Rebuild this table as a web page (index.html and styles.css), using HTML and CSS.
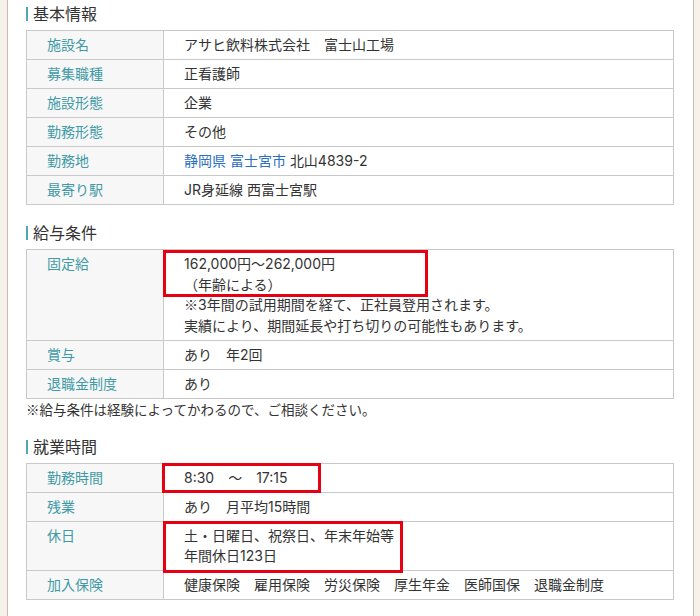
FILE: index.html
```html
<!DOCTYPE html>
<html lang="ja">
<head>
<meta charset="utf-8">
<title>求人詳細</title>
<link rel="stylesheet" href="styles.css">
</head>
<body>
<div class="page">
  <section class="block">
    <h2 class="block-title">基本情報</h2>
    <table class="info">
      <tr><th>施設名</th><td>アサヒ飲料株式会社　富士山工場</td></tr>
      <tr><th>募集職種</th><td>正看護師</td></tr>
      <tr><th>施設形態</th><td>企業</td></tr>
      <tr><th>勤務形態</th><td>その他</td></tr>
      <tr><th>勤務地</th><td><a class="link" href="#">静岡県</a> <a class="link" href="#">富士宮市</a> 北山4839-2</td></tr>
      <tr><th>最寄り駅</th><td>JR身延線 西富士宮駅</td></tr>
    </table>
  </section>

  <section class="block block-next">
    <h2 class="block-title">給与条件</h2>
    <table class="info">
      <tr><th>固定給</th><td class="mark-cell">162,000円～262,000円<br>（年齢による）<br><span class="cjk">※</span>3年間の試用期間を経て、正社員登用されます。<br>実績により、期間延長や打ち切りの可能性もあります。<span class="mark mark-salary"></span></td></tr>
      <tr><th>賞与</th><td>あり　年2回</td></tr>
      <tr><th>退職金制度</th><td>あり</td></tr>
    </table>
    <p class="note">※給与条件は経験によってかわるので、ご相談ください。</p>
  </section>

  <section class="block block-next2">
    <h2 class="block-title">就業時間</h2>
    <table class="info">
      <tr><th>勤務時間</th><td class="mark-cell">8:30　～　17:15<span class="mark mark-time"></span></td></tr>
      <tr><th>残業</th><td>あり　月平均15時間</td></tr>
      <tr><th>休日</th><td class="mark-cell">土・日曜日、祝祭日、年末年始等<br>年間休日123日<span class="mark mark-holiday"></span></td></tr>
      <tr><th>加入保険</th><td>健康保険　雇用保険　労災保険　厚生年金　医師国保　退職金制度</td></tr>
    </table>
  </section>
</div>
</body>
</html>
```

FILE: styles.css
```css
html, body {
  margin: 0;
  padding: 0;
}
body {
  background: #f7f1ec;
  font-family: Inter, "Noto Sans CJK JP", sans-serif;
  color: #333333;
  height: 616px;
  overflow: hidden;
}
.page {
  margin-left: 7px;
  width: 687px;
  min-height: 616px;
  box-sizing: border-box;
  background: #ffffff;
  border-left: 1px solid #cdb9ad;
  border-right: 1px solid #cdb9ad;
  padding: 4px 20px 0 18px;
}
.block-title {
  display: flex;
  align-items: center;
  margin: 0 0 6px 0;
  font-size: 16px;
  font-weight: normal;
  line-height: 20px;
  color: #333333;
}
.block-title::before {
  content: "";
  display: block;
  width: 2px;
  height: 14px;
  background: #4fa9b3;
  margin-right: 5px;
}
.block-next {
  margin-top: 18px;
}
.block-next2 {
  margin-top: 18px;
}
.info {
  width: 648px;
  border-collapse: collapse;
  font-size: 14px;
  line-height: 20.5px;
  table-layout: fixed;
}
.info th,
.info td {
  border: 1px solid #c9c9c9;
  padding: 4px 0 3.5px 20px;
  vertical-align: top;
  text-align: left;
  font-weight: normal;
}
.info th {
  width: 116px;
  background: #f7f7f7;
  color: #3f9aa6;
}
.info td {
  color: #333333;
}
.cjk {
  font-family: "Noto Sans CJK JP", sans-serif;
  line-height: 1;
}
.link {
  color: #2b6fc2;
  text-decoration: none;
}
.mark-cell {
  position: relative;
}
.mark {
  position: absolute;
  border: 3px solid #e60012;
  box-sizing: border-box;
  pointer-events: none;
}
.mark-salary {
  left: -1px;
  top: 0px;
  width: 265px;
  height: 47px;
}
.mark-time {
  left: -2px;
  top: -1px;
  width: 159px;
  height: 30px;
}
.mark-holiday {
  left: -1px;
  top: -1px;
  width: 240px;
  height: 52px;
}
.note {
  margin: 0;
  font-family: "Noto Sans CJK JP", sans-serif;
  font-size: 13.5px;
  line-height: 20px;
  color: #333333;
}
```
